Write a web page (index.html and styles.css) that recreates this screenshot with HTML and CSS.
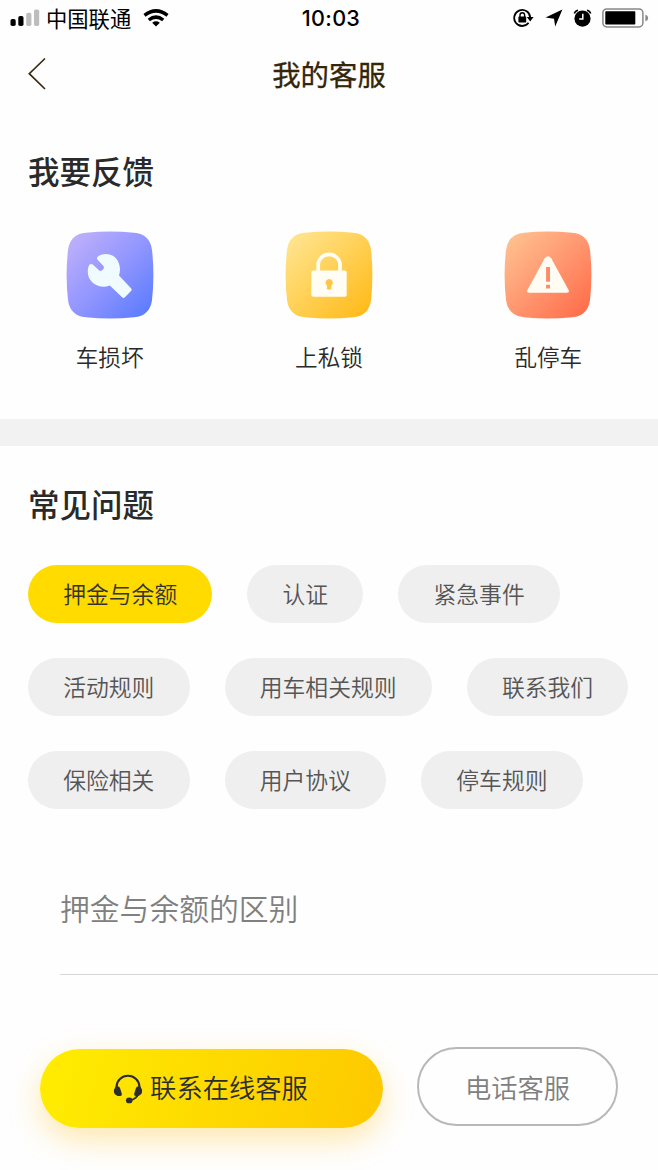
FILE: index.html
```html
<!DOCTYPE html>
<html lang="zh-CN">
<head>
<meta charset="utf-8">
<title>我的客服</title>
<link rel="stylesheet" href="styles.css">
</head>
<body>
<header class="status-bar">
  <div class="status-left">
    <svg class="signal" width="30" height="18" viewBox="0 0 30 18">
      <rect x="0.5" y="10" width="5.2" height="7" rx="1.8" fill="#000"/>
      <rect x="8.3" y="7" width="5.2" height="10" rx="1.8" fill="#000"/>
      <rect x="16.2" y="3.8" width="5.2" height="13.2" rx="1.8" fill="#bdbdbd"/>
      <rect x="24" y="0.4" width="5.2" height="16.6" rx="1.8" fill="#bdbdbd"/>
    </svg>
    <span class="carrier">中国联通</span>
    <svg class="wifi" width="26" height="18" viewBox="0 0 26 18">
      <g fill="none" stroke="#000" stroke-width="3.5">
        <path d="M1.5 6.4Q13 -2.6 24.5 6.4"/>
        <path d="M5.8 11Q13 5.2 20.2 11"/>
      </g>
      <path d="M9.2 13.8Q13 10.9 16.8 13.8L13 17.4Z"/>
    </svg>
  </div>
  <time class="clock">10:03</time>
  <div class="status-right">
    <svg width="21" height="20" viewBox="0 0 21 20">
      <path d="M15.6 14.8A8 8 0 1 1 17.2 9.6" fill="none" stroke="#000" stroke-width="1.8"/>
      <path d="M13.8 9h6.8l-3.4 4.4z"/>
      <rect x="5.4" y="8.4" width="7.8" height="6" rx=".6"/>
      <path d="M7 9V7a2.3 2.3 0 0 1 4.6 0V9" fill="none" stroke="#000" stroke-width="1.4"/>
    </svg>
    <svg class="locate" width="18" height="18" viewBox="0 0 18 18">
      <path d="M17.4.6 10.2 17.6 9 9.8.6 8.5Z"/>
    </svg>
    <svg class="alarm" width="19" height="18" viewBox="0 0 19 18">
      <circle cx="9.5" cy="9.6" r="8.1"/>
      <path d="M1.3 4.5Q2.2 1.7 5 1.2M17.7 4.5Q16.8 1.7 14 1.2" fill="none" stroke="#000" stroke-width="1.6"/>
      <path d="M9.8 4.8V10H6.2" fill="none" stroke="#fff" stroke-width="1.5"/>
    </svg>
    <svg class="battery" width="47" height="20" viewBox="0 0 47 20">
      <rect x=".9" y=".9" width="40" height="18" rx="3.8" fill="none" stroke="#888" stroke-width="1.5"/>
      <rect x="3.3" y="3.3" width="30" height="13.2" rx=".8"/>
      <path d="M43.4 6.5q2.8 1 2.8 3.5t-2.8 3.5z" fill="#888"/>
    </svg>
  </div>
</header>

<nav class="nav-bar">
  <svg class="back" width="20" height="34" viewBox="0 0 20 34">
    <path d="M18 1.5 2.3 16.7 18 32" fill="none" stroke="#3b2a0c" stroke-width="1.7"/>
  </svg>
  <h1 class="nav-title">我的客服</h1>
</nav>

<section class="feedback">
  <h2 class="section-title">我要反馈</h2>
  <div class="tiles">
    <div class="tile">
      <svg class="tile-icon" width="88" height="88" viewBox="0 0 88 88">
        <defs><linearGradient id="violet" x1="0" y1="0" x2="1" y2="1"><stop offset="0" stop-color="#c5b3fb"/><stop offset=".5" stop-color="#9296ff"/><stop offset="1" stop-color="#5478fe"/></linearGradient></defs>
        <path fill="url(#violet)" d="M20 1.8Q44-.8 68 1.8Q84 3.2 86 19Q88.8 44 86 69Q84 84.8 68 86.3Q44 88.8 20 86.3Q4 84.8 2 69Q-.8 44 2 19Q4 3.2 20 1.8Z"/>
        <path fill="#f0fbff" d="M32 25.4C36.5 22 43.5 22.2 48 25.6C53.4 29.8 55.4 37.5 53 44.6L65 57.3Q66.3 58.6 65 60L58.9 66.3Q57.5 67.7 56.1 66.3L43.8 54.4C36.5 57.4 28.2 55 24.2 48.8C21.4 44.5 21 38.5 23.2 34Q24.8 32 26.8 33.6L33.2 39.6Q35 40.6 37 38.5Q38.8 36.4 37.2 34.7L31.6 28.8Q30.2 26.8 32 25.4Z"/>
      </svg>
      <span>车损坏</span>
    </div>
    <div class="tile">
      <svg class="tile-icon" width="88" height="88" viewBox="0 0 88 88">
        <defs><linearGradient id="amber" x1="0" y1="0" x2="1" y2="1"><stop offset="0" stop-color="#ffe799"/><stop offset=".5" stop-color="#ffd054"/><stop offset="1" stop-color="#ffb711"/></linearGradient></defs>
        <path fill="url(#amber)" d="M20 1.8Q44-.8 68 1.8Q84 3.2 86 19Q88.8 44 86 69Q84 84.8 68 86.3Q44 88.8 20 86.3Q4 84.8 2 69Q-.8 44 2 19Q4 3.2 20 1.8Z"/>
        <path d="M33.2 41V34a10.9 10.6 0 0 1 21.8 0V41" fill="none" stroke="#fffdf4" stroke-width="3.7"/>
        <rect x="26.3" y="39.5" width="35.4" height="26.2" rx="2" fill="#fffdf4"/>
        <path d="M44.2 48a3.7 3.7 0 0 0-2 6.8l-.3 3.2q2.3 1.4 4.6 0l-.3-3.2a3.7 3.7 0 0 0-2-6.8z" fill="#ffc646"/>
      </svg>
      <span>上私锁</span>
    </div>
    <div class="tile">
      <svg class="tile-icon" width="88" height="88" viewBox="0 0 88 88">
        <defs><linearGradient id="coral" x1="0" y1="0" x2="1" y2="1"><stop offset="0" stop-color="#ffc694"/><stop offset=".5" stop-color="#ff9770"/><stop offset="1" stop-color="#ff6845"/></linearGradient></defs>
        <path fill="url(#coral)" d="M20 1.8Q44-.8 68 1.8Q84 3.2 86 19Q88.8 44 86 69Q84 84.8 68 86.3Q44 88.8 20 86.3Q4 84.8 2 69Q-.8 44 2 19Q4 3.2 20 1.8Z"/>
        <path d="M40.8 27.2Q44 23.2 47.2 27.2L64.6 59Q65.8 61.7 62.8 61.7H25.2Q22.2 61.7 23.4 59Z" fill="#fffdf3"/>
        <path d="M42.1 36h3.9v14.8h-3.9zM42.1 53.8h3.9v3.8h-3.9z" fill="#ff8a65"/>
      </svg>
      <span>乱停车</span>
    </div>
  </div>
</section>

<main class="faq">
  <h2 class="section-title">常见问题</h2>
  <div class="chips">
    <span class="chip chip-active">押金与余额</span>
    <span class="chip">认证</span>
    <span class="chip">紧急事件</span>
    <span class="chip">活动规则</span>
    <span class="chip">用车相关规则</span>
    <span class="chip">联系我们</span>
    <span class="chip">保险相关</span>
    <span class="chip">用户协议</span>
    <span class="chip">停车规则</span>
  </div>
  <div class="question">押金与余额的区别</div>
</main>

<footer class="actions">
  <button class="btn btn-online">
    <svg class="headset" width="30" height="30" viewBox="0 0 30 30">
      <path d="M3.6 15V12.6a11.4 10.9 0 0 1 22.8 0V15" fill="none" stroke="#2b2d31" stroke-width="2.1"/>
      <path d="M2.6 12.6Q6.4 11.6 7.2 14.4L8.9 20Q9.1 21.8 7.2 22Q2.8 22.2 1.1 18.9Q.3 15.6 2.6 12.6ZM27.4 12.6Q23.6 11.6 22.8 14.4L21.1 20Q20.9 21.8 22.8 22Q27.2 22.2 28.9 18.9Q29.7 15.6 27.4 12.6Z" fill="#2b2d31"/>
      <path d="M25 20.5Q23.3 25 17 26.3" fill="none" stroke="#2b2d31" stroke-width="2"/>
      <ellipse cx="16.2" cy="26.4" rx="3.3" ry="2.9" fill="#2b2d31"/>
    </svg>
    <span class="btn-label">联系在线客服</span>
  </button>
  <button class="btn btn-phone">电话客服</button>
</footer>
</body>
</html>
```
FILE: styles.css
```css
* { box-sizing: border-box; }

body {
  margin: 0;
  width: 658px;
  height: 1170px;
  overflow: hidden;
  display: flex;
  flex-direction: column;
  background: #fefefe;
  color: #2a2a2a;
  font-family: "Noto Sans CJK SC", sans-serif;
}

svg { display: block; flex: none; }

.status-bar {
  display: grid;
  grid-template-columns: 1fr auto 1fr;
  align-items: center;
  height: 36px;
  padding: 0 9px 0 10px;
  color: #000;
}

.status-left, .status-right { display: flex; align-items: center; }
.status-right { justify-content: flex-end; }
.carrier { margin-left: 6px; font-size: 21.3px; line-height: 36px; }
.wifi { margin-left: 12px; }
.clock {
  padding-left: 3px;
  font: 500 21.6px/36px Inter, sans-serif;
  letter-spacing: 0.3px;
}
.locate { margin-left: 11px; }
.alarm { margin-left: 10px; }
.battery { margin-left: 10px; }

.nav-bar {
  display: grid;
  grid-template-columns: 1fr auto 1fr;
  align-items: center;
  height: 76px;
  padding: 0 27px;
}

.nav-title {
  margin: 0;
  font-size: 28.4px;
  font-weight: 400;
  line-height: 76px;
  color: #35260a;
  -webkit-text-stroke: 0.3px #35260a;
}

.feedback {
  height: 334px;
  padding-top: 34px;
  border-bottom: 27px solid #f2f2f2;
}

.section-title {
  margin: 0;
  padding-left: 28px;
  font-size: 31.5px;
  font-weight: 500;
  line-height: 48px;
}

.tiles {
  display: grid;
  grid-template-columns: repeat(3, 1fr);
  margin-top: 37px;
}

.tile {
  display: flex;
  flex-direction: column;
  align-items: center;
  gap: 21px;
  font-size: 22.6px;
  font-weight: 350;
  line-height: 34px;
}

.faq { height: 529px; padding-top: 33px; }

.chips {
  display: flex;
  flex-wrap: wrap;
  gap: 35px;
  margin-top: 38px;
  padding: 0 28px;
}

.chip {
  height: 58px;
  padding: 0 35.2px;
  border-radius: 29px;
  background: #efefef;
  color: #555;
  font-size: 22.8px;
  font-weight: 350;
  line-height: 57px;
}

.chip-active { background: #ffdb00; color: #333; }

.question {
  height: 131px;
  margin: 35px 0 0 60px;
  border-bottom: 1px solid #d6d6d6;
  color: #808080;
  font-size: 29.8px;
  font-weight: 350;
  line-height: 127px;
}

.actions {
  display: flex;
  align-items: flex-start;
  gap: 34px;
  margin-top: 72px;
  padding-left: 40px;
}

.btn {
  display: flex;
  align-items: center;
  justify-content: center;
  height: 79px;
  padding: 0;
  border-radius: 40px;
  font: 350 26.3px/79px "Noto Sans CJK SC", sans-serif;
}

.btn-online {
  width: 343px;
  margin-top: 2px;
  gap: 7px;
  padding-right: 2px;
  border: 0;
  background: linear-gradient(105deg, #ffed00, #fdc800);
  box-shadow: 0 12px 30px rgba(255, 190, 20, 0.34);
  color: #2b2d31;
}

.btn-label { padding-bottom: 4px; line-height: 75px; }

.btn-phone {
  width: 201px;
  border: 2px solid #b8b8b8;
  background: #fefefe;
  color: #808080;
}
```
